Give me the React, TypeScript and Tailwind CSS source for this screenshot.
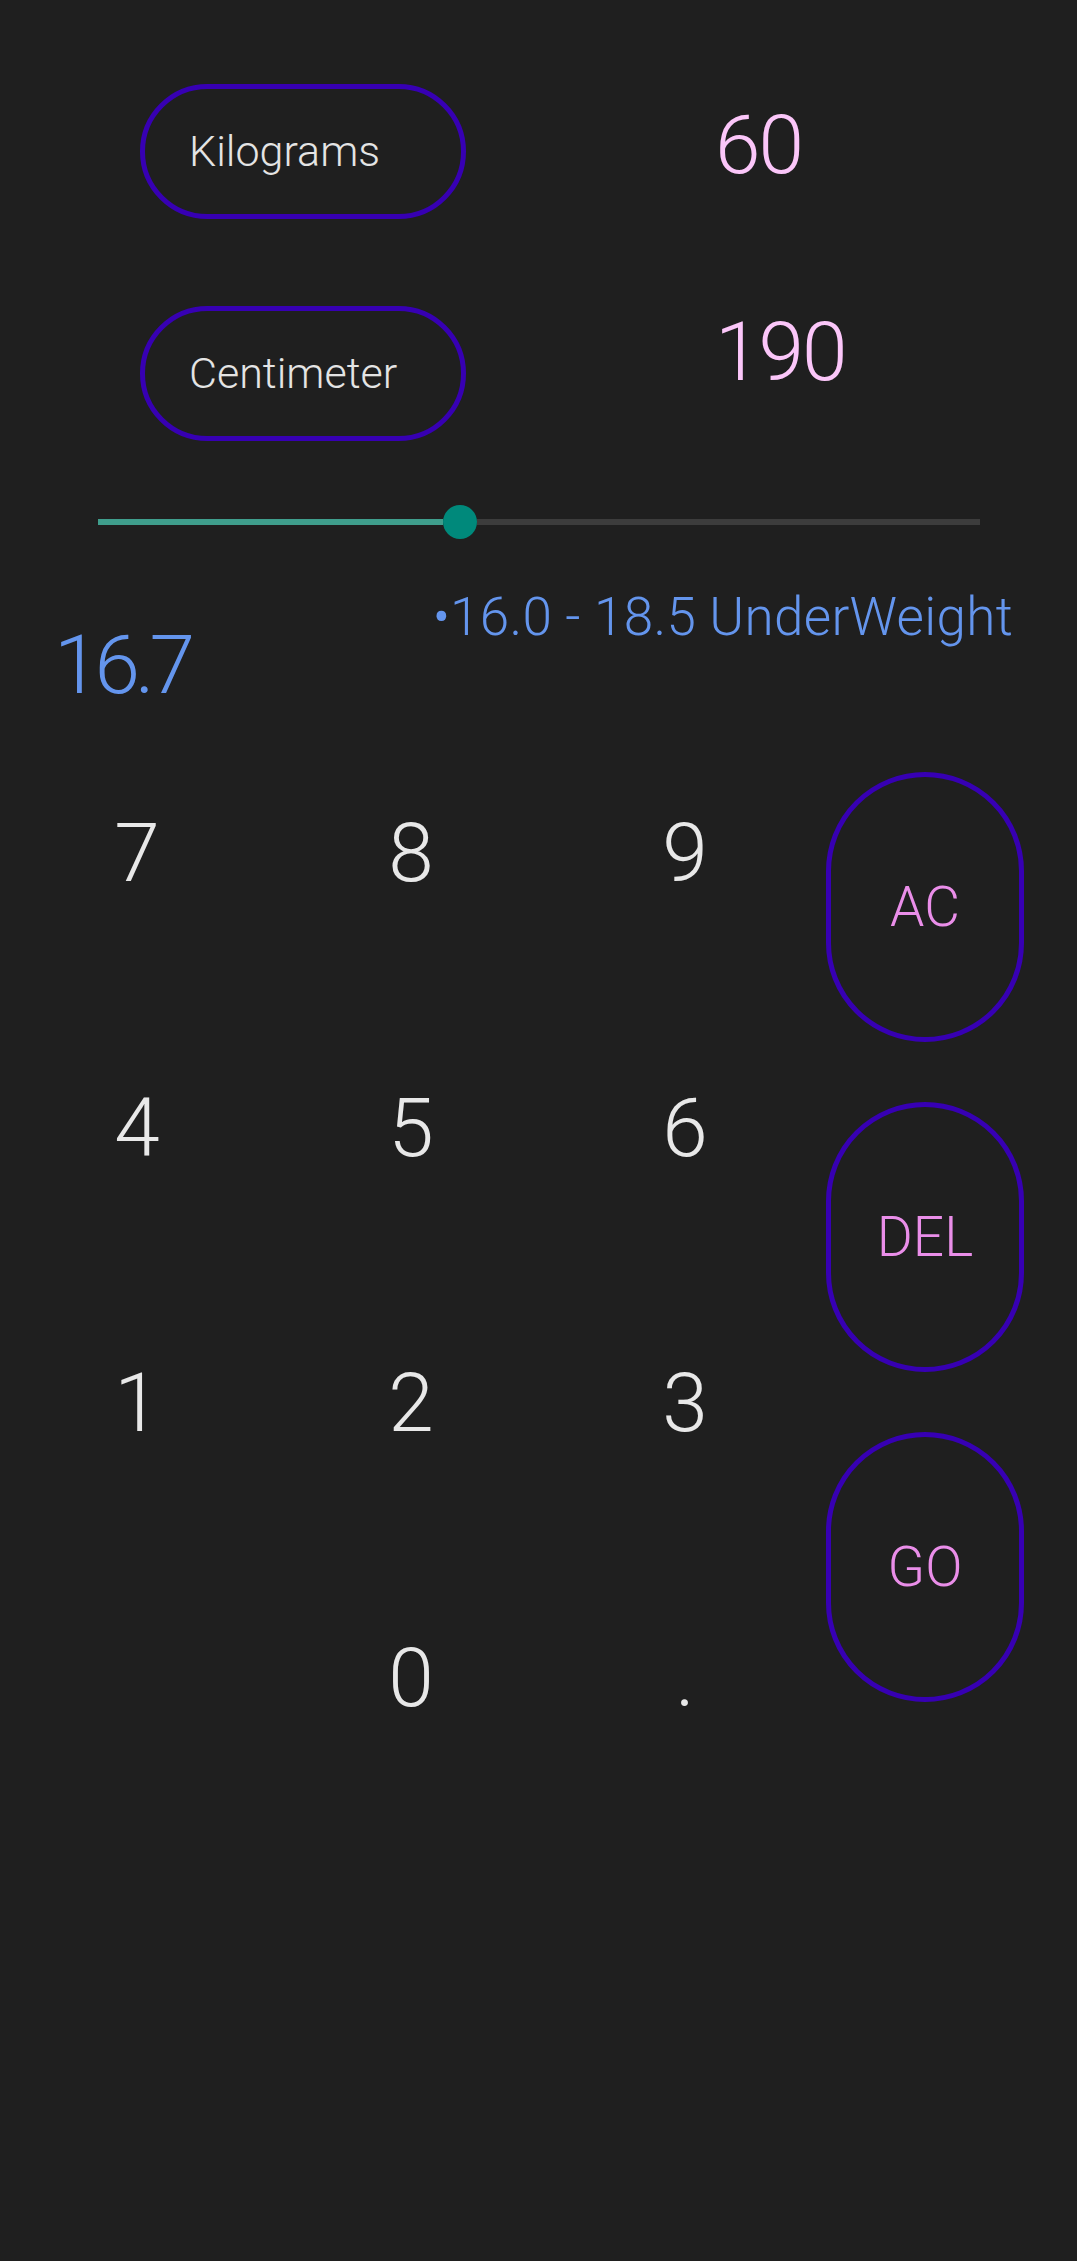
import React from "react";

const font = { fontFamily: "Roboto, 'Noto Sans', sans-serif" };

function UnitRow({ label, value, valueTop }: { label: string; value: string; valueTop: string }) {
  return (
    <div className="flex items-start">
      <div className="ml-[140px] flex h-[135px] w-[326px] items-center rounded-full border-[5px] border-[#3700b3] pl-[44px]">
        <span className="text-[43px] leading-none font-light text-[#e4e4e4]">{label}</span>
      </div>
      <div className={`ml-[249px] text-[82px] leading-none font-light tracking-[-2px] text-[#fbc6f9] ${valueTop}`}>{value}</div>
    </div>
  );
}

function Slider() {
  return (
    <div className="ml-[98px] mt-[64px] flex h-[34px] w-[882px] items-center">
      <div className="h-[6px] w-[345px] bg-[#3f9e8c]" />
      <div className="h-[34px] w-[34px] rounded-full bg-[#00897b]" />
      <div className="h-[6px] flex-1 bg-[#3c3c3c]" />
    </div>
  );
}

const keys = ["7", "8", "9", "4", "5", "6", "1", "2", "3", "", "0", "."];
const actions = ["AC", "DEL", "GO"];

export default function App() {
  return (
    <div className="min-h-[2261px] w-full bg-[#1f1f1f] pt-[84px]" style={font}>
      <UnitRow label="Kilograms" value="60" valueTop="mt-[20px]" />
      <div className="mt-[87px]">
        <UnitRow label="Centimeter" value="190" valueTop="mt-[5px]" />
      </div>

      <Slider />

      <div className="mt-[52px] flex items-start justify-between pl-[54px] pr-[64px]">
        <div className="mt-[33px] text-[82px] leading-none font-light tracking-[-5px] text-[#6495ed]">16.7</div>
        <div className="text-[53px] leading-none font-light tracking-[0.3px] text-[#6495ed]">•16.0 - 18.5 UnderWeight</div>
      </div>

      <div className="mt-[9px] flex">
        <div className="grid w-[822px] grid-cols-3">
          {keys.map((k, i) => (
            <div key={i} className="flex h-[275px] items-center justify-center text-[82px] leading-none font-light text-[#e8e8e8]">
              {k}
            </div>
          ))}
        </div>
        <div className="ml-[4px] flex w-[198px] flex-col gap-[60px] pt-[57px]">
          {actions.map((a) => (
            <div key={a} className="flex h-[270px] items-center justify-center rounded-full border-[5px] border-[#3700b3] text-[55px] leading-none font-light text-[#ea8ee9]">
              {a}
            </div>
          ))}
        </div>
      </div>
    </div>
  );
}
